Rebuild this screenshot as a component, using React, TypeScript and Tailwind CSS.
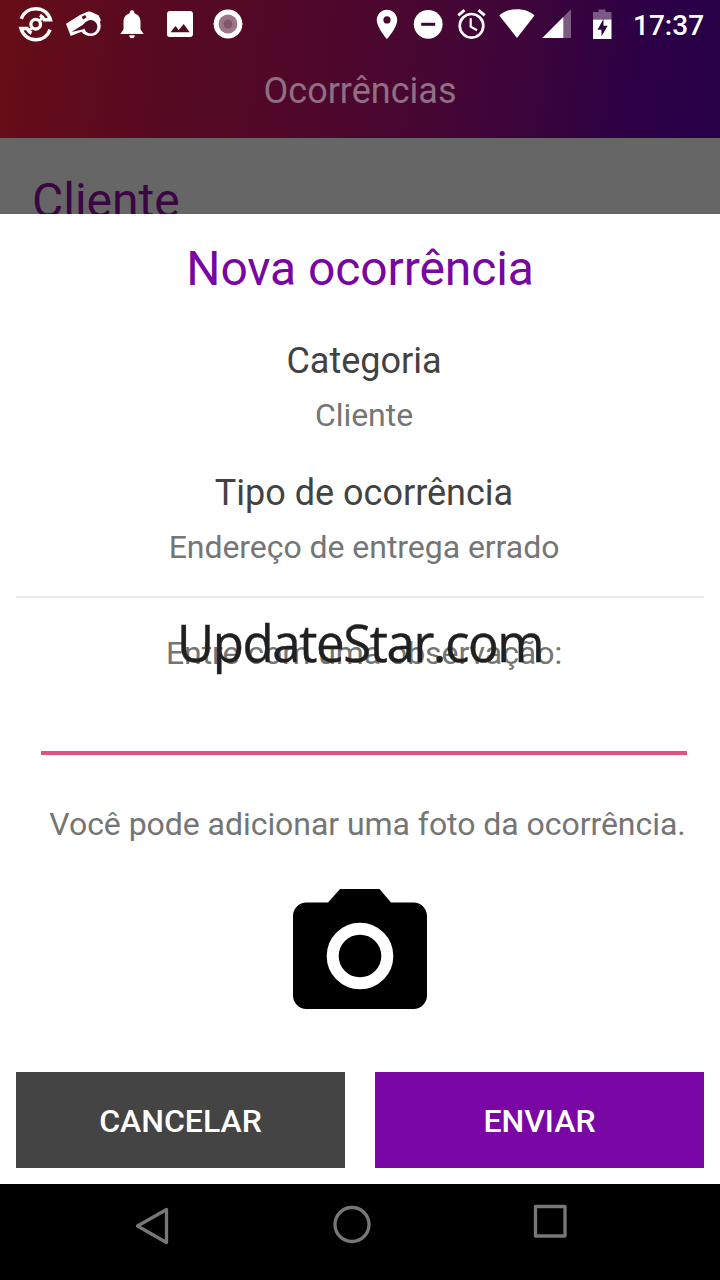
const leftIcons = [
  // target
  <svg key="target" className="h-12 w-12" viewBox="0 0 48 48" fill="none" stroke="white">
    <circle cx="23.700" cy="24.200" r="4.800" strokeWidth="3.300" />
    <path d="M9.300 18.800C11.500 12.600 17 8.700 23.700 8.700c7.300 0 12.700 4.300 14.700 11.100h-6.200c-1-2-2.300-3.500-4.300-4.500" strokeWidth="3.500" />
    <path d="M38.100 29.600C35.900 35.800 30.400 39.700 23.700 39.700c-7.300 0-12.700-4.300-14.700-11.100h6.200c1 2 2.300 3.500 4.300 4.500" strokeWidth="3.500" />
    <path d="M27.200 20.700l2.600-2.200M20.200 27.700l-2.600 2.200" strokeWidth="2.500" />
  </svg>,
  // whistle
  <svg key="whistle" className="h-12 w-12" viewBox="0 0 48 48" fill="white">
    <path d="M6 23.800L20 15l7.500-3.200c1.500-.6 3-.3 4.500.4l6.500 3.100 2.300 4.700-.8 2c1.500 4.500.6 9-3.200 12-4.300 3.300-11.300 2.700-15.300-2.200l-10.800 4.300z" strokeLinejoin="round" />
    <circle cx="30.700" cy="26.800" r="6.700" fill="#560a24" />
    <path d="M11.500 32l11-7 3.500-3.200 1 4.500-3.500 3z" fill="#560a24" />
    <path d="M21.700 16.700l3.500-1.700 1.300 2.400-3.500 2z" fill="#560a24" />
  </svg>,
  // bell
  <svg key="bell" className="h-12 w-12" viewBox="0 0 48 48" fill="white">
    <path d="M24 10.300c1.300 0 2.200.9 2.200 2.200v.8c4 1 6.300 4.500 6.300 8.700v7.500l3.200 4.500H12.300l3.200-4.500V22c0-4.200 2.300-7.700 6.300-8.700v-.8c0-1.300.9-2.200 2.200-2.200zM21.200 35.300h5.600c0 1.800-1.200 3-2.800 3s-2.800-1.200-2.800-3z" />
  </svg>,
  // picture
  <svg key="picture" className="h-12 w-12" viewBox="0 0 48 48" fill="white">
    <path fillRule="evenodd" d="M13.700 11h20.600c1.500 0 2.700 1.200 2.700 2.700v20.600c0 1.500-1.200 2.700-2.700 2.700H13.700a2.700 2.700 0 01-2.700-2.700V13.700c0-1.500 1.200-2.700 2.700-2.700zM14.500 32.300h19.200l-6-8.200-5 6-3.200-4z" />
  </svg>,
  // record
  <svg key="record" className="h-12 w-12" viewBox="0 0 48 48">
    <circle cx="24" cy="24" r="14.400" fill="white" />
    <circle cx="24" cy="24" r="9.400" fill="#9c7688" />
    <circle cx="24" cy="24" r="4.500" fill="#83566c" />
  </svg>,
];

function StatusBar() {
  return (
    <div className="flex h-12 items-center pl-3">
      {leftIcons}
      <div className="ml-[121px] flex items-center">
        {/* location */}
        <svg className="h-12 w-[30px]" viewBox="0 0 30 48" fill="white">
          <path fillRule="evenodd" d="M14 9.700c5.600 0 10.200 4.500 10.200 10.200C24.200 27.500 14 39 14 39S3.800 27.500 3.800 19.900C3.800 14.200 8.400 9.700 14 9.700zm0 6.600a3.600 3.600 0 100 7.200 3.600 3.600 0 000-7.200z" />
        </svg>
        {/* do not disturb */}
        <svg className="ml-[9px] h-12 w-[32px]" viewBox="0 0 32 48">
          <circle cx="16.200" cy="24.300" r="14.400" fill="white" />
          <path d="M9.200 22.800h14v3h-14z" fill="#42052f" />
        </svg>
        {/* alarm */}
        <svg className="ml-[11px] h-12 w-[32px]" viewBox="0 0 32 48" fill="none" stroke="white">
          <circle cx="16.500" cy="25.800" r="11.800" strokeWidth="2.700" />
          <path d="M15.700 18.300v8.400l6.300 3.600" strokeWidth="2.200" />
          <path d="M3.300 15.300l6.200-5.100M29.700 15.300l-6.200-5.100" strokeWidth="3" />
        </svg>
        {/* wifi */}
        <svg className="ml-[11px] h-12 w-[38px]" viewBox="0 0 38 48" fill="white">
          <path d="M1.300 15.500C6 11.300 12 9.300 19 9.300s13 2 17.500 6.200L19 38z" />
        </svg>
        {/* signal */}
        <svg className="ml-[6px] h-12 w-[30px]" viewBox="0 0 30 48">
          <path d="M0.300 38L29 9.300V38z" fill="white" fillOpacity=".35" />
          <path d="M0.300 38L21.300 17v21z" fill="white" />
        </svg>
        {/* battery */}
        <svg className="ml-[20px] h-12 w-[22px]" viewBox="0 0 22 48">
          <path d="M1 12h5.500V9.500h7V12h6v7.500H1z" fill="white" fillOpacity=".35" />
          <path fillRule="evenodd" d="M1 19.500h18.500V39H1zM11.200 19.500L5.500 29.700h4v6.500l6.200-10.400h-4.200v-6.300z" fill="white" />
        </svg>
      </div>
      <span className="ml-[19px] mt-[3px] text-[28px] leading-none font-medium text-white">17:37</span>
    </div>
  );
}

function CameraIcon() {
  return (
    <svg className="h-[120px] w-[134px]" viewBox="0 0 134 120">
      <path d="M47 0h39.500L98 13.500h22.500c7.500 0 13.500 6 13.500 13.500v79.500c0 7.500-6 13.500-13.500 13.500h-107C6 120 0 114 0 106.500V27c0-7.500 6-13.500 13.500-13.500H35z" fill="black" />
      <circle cx="67" cy="67" r="27.300" fill="none" stroke="white" strokeWidth="12" />
    </svg>
  );
}

function Field({ label, value }: { label: string; value: string }) {
  return (
    <div className="flex flex-col items-center pl-2">
      <p className="text-[36px] leading-[50px] text-[#424242]">{label}</p>
      <p className="mt-[6px] text-[32px] leading-[46px] tracking-[-0.05px] text-[#757575]">{value}</p>
    </div>
  );
}

function NavigationBar() {
  return (
    <nav className="flex h-24 bg-black text-[#777777]">
      <svg className="ml-[132px] mt-[20px] h-[44px] w-[40px]" viewBox="0 0 40 44" fill="none" stroke="currentColor" strokeWidth="3.300" strokeLinejoin="round">
        <path d="M34.500 5.500v33L5.500 22z" />
      </svg>
      <svg className="ml-[160px] mt-[20px] h-[40px] w-[40px]" viewBox="0 0 40 40" fill="none" stroke="currentColor" strokeWidth="3.300">
        <circle cx="20" cy="20.500" r="17" />
      </svg>
      <svg className="ml-[160px] mt-[20px] h-[36px] w-[38px]" viewBox="0 0 38 36" fill="none" stroke="currentColor" strokeWidth="3.300" strokeLinejoin="round">
        <rect x="3.500" y="2.500" width="29.500" height="29.500" />
      </svg>
    </nav>
  );
}

export default function App() {
  return (
    <div className="flex h-[1280px] w-[720px] flex-col overflow-hidden bg-white font-['Roboto',sans-serif]">
      <header className="h-[138px] shrink-0 bg-linear-[97deg,#670d17_0%,#550922_25%,#4e072c_47%,#3f0539_70%,#2c0045_88%,#270049_100%]">
        <StatusBar />
        <h1 className="text-center text-[36px] leading-[86px] text-[#8f7083]">Ocorrências</h1>
      </header>

      <div className="h-[76px] shrink-0 overflow-hidden bg-[#666666] pl-8 pt-8">
        <h2 className="text-[48px] leading-[61px] text-[#3a0642]">Cliente</h2>
      </div>

      <main className="flex h-[970px] shrink-0 flex-col px-4">
        <h2 className="mt-[24px] text-center text-[48px] leading-[62px] tracking-[-0.1px] text-[#7706a2]">Nova ocorrência</h2>

        <div className="mt-[36px]">
          <Field label="Categoria" value="Cliente" />
        </div>
        <div className="mt-[30px]">
          <Field label="Tipo de ocorrência" value="Endereço de entrega errado" />
        </div>

        <hr className="mt-[26px] border-t-2 border-[#ebebeb]" />

        <div className="relative mt-[31px] h-[48px]">
          <p className="pl-2 text-center text-[32px] leading-[48px] tracking-[-0.05px] text-[#757575]">Entre com uma observação:</p>
          <span className="absolute inset-x-0 -top-[21px] text-center font-['Open_Sans',sans-serif] text-[51px] leading-[68px] tracking-[-1.4px] text-[#202020] [-webkit-text-stroke:0.4px_#202020]">
            UpdateStar.com
          </span>
        </div>

        <div className="ml-[25px] mr-[17px] mt-[74px] h-[4px] bg-[#e4517f]" />

        <p className="mt-[45px] whitespace-nowrap pl-[15px] text-center text-[32px] leading-[48px] tracking-[-0.05px] text-[#757575]">
          Você pode adicionar uma foto da ocorrência.
        </p>

        <button className="mt-[41px] self-center" aria-label="Foto">
          <CameraIcon />
        </button>

        <div className="mt-[63px] grid h-[96px] grid-cols-2 gap-[30px] text-[32px] font-medium text-white">
          <button className="bg-[#444444] pt-px">CANCELAR</button>
          <button className="bg-[#7a06a6] pt-px">ENVIAR</button>
        </div>
      </main>

      <NavigationBar />
    </div>
  );
}
